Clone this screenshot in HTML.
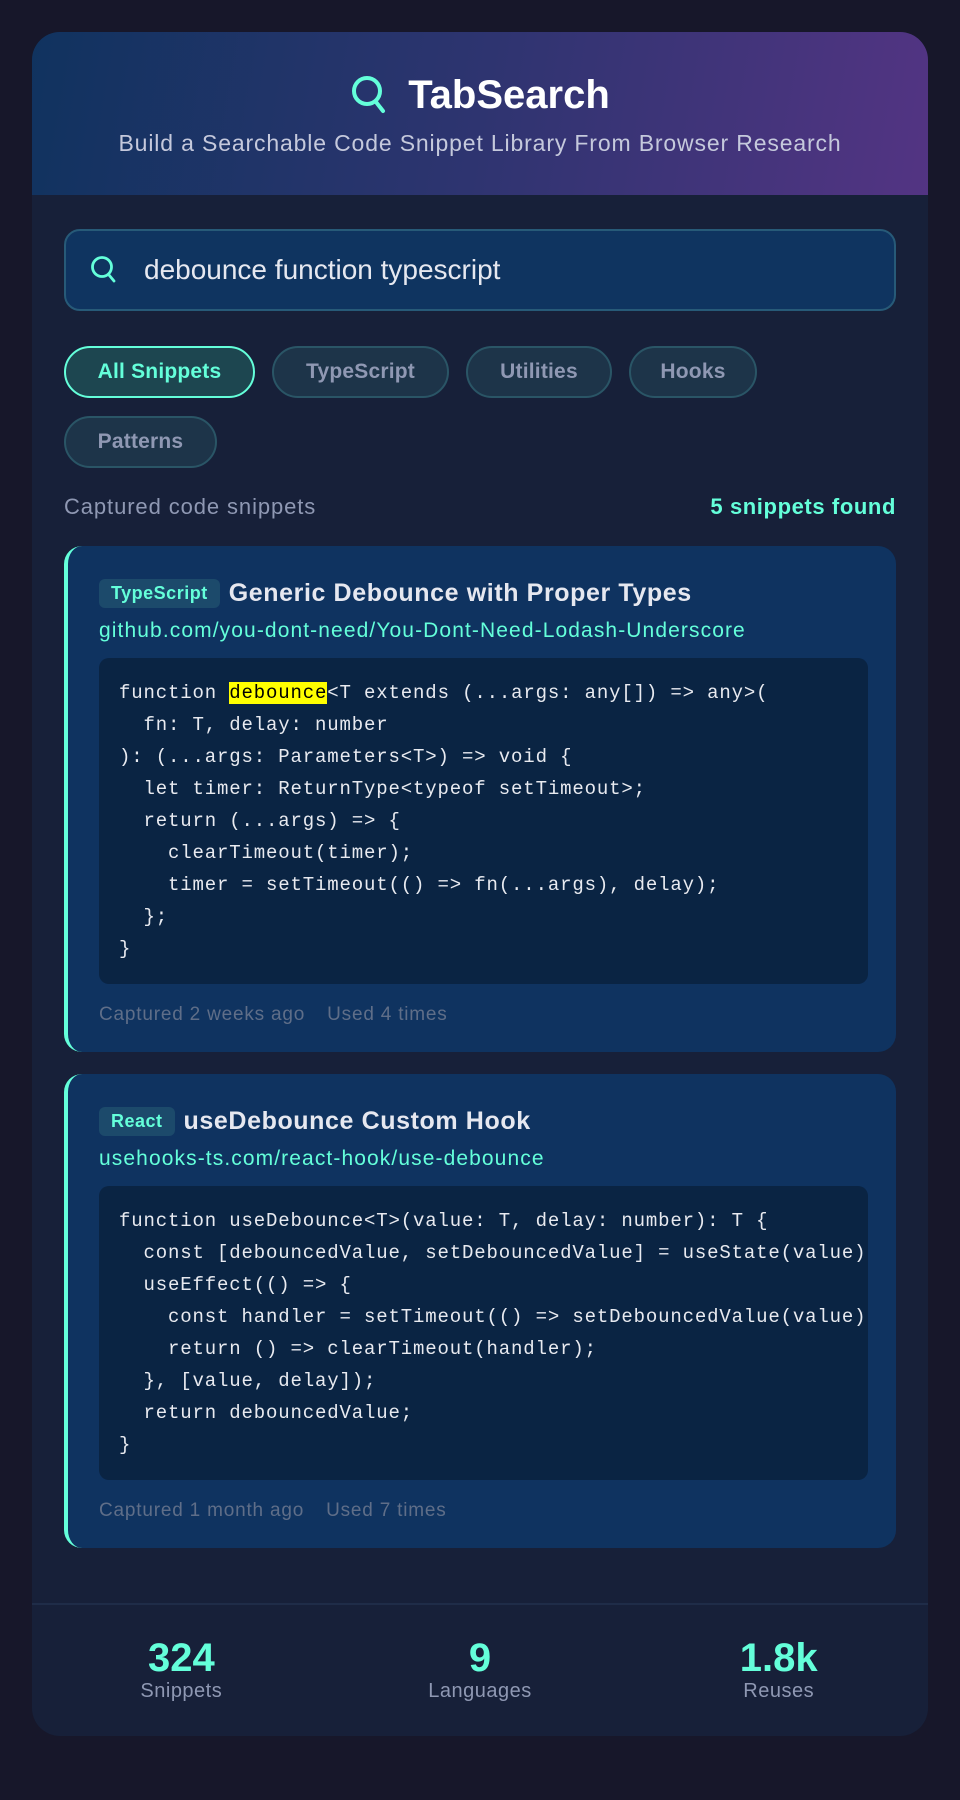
<!DOCTYPE html>
<html><head><meta charset="utf-8"><style>
*{box-sizing:border-box;margin:0;padding:0}
body{width:960px;height:1800px;background:#17172a;font-family:"Liberation Sans",sans-serif;overflow:hidden}
.wrap{position:absolute;left:32px;top:32px;width:896px;height:1704px;background:#172039;border-radius:28px;overflow:hidden}
.hdr{height:163px;background:linear-gradient(100deg,#10335f 0%,#2e3470 50%,#533483 100%);text-align:center;padding-top:41px}
.ttl{display:flex;justify-content:center;align-items:center;gap:18px;color:#fff;font-weight:bold;font-size:40px;height:44px}
.sub{color:#c5c9dc;font-size:23px;letter-spacing:.85px;margin-top:13px}
.main{padding:34px 32px 0 32px}
.search{height:82px;border:2px solid #275a78;border-radius:16px;background:#0f3460;display:flex;align-items:center;padding-left:24px;color:#e6e8f0;font-size:28px}
.search svg{margin-right:26px}
.chips{margin-top:35px;display:flex;flex-wrap:wrap;gap:18px 17px;width:720px}
.chip{height:52px;border-radius:26px;border:2px solid #2a5566;background:#1d3449;color:#8f98b3;font-weight:bold;font-size:21px;letter-spacing:.2px;display:flex;align-items:center;justify-content:center}
.chip.on{border-color:#64ffda;background:#1d4650;color:#64ffda}
.lbl{margin-top:26px;display:flex;justify-content:space-between;font-size:22px;letter-spacing:.9px;color:#8f98b3;height:26px;line-height:26px}
.lbl b{color:#64ffda;font-size:22px;letter-spacing:.6px}
.card{background:#0f3360;border-left:4px solid #64ffda;border-radius:18px;padding:32px 28px 0 31px;margin-top:22px}
.c1{margin-top:26px;height:506px}
.c2{height:474px}
.row{display:flex;align-items:center;height:30px}
.badge{background:#1c4a6b;color:#64ffda;font-weight:bold;font-size:18px;letter-spacing:.5px;border-radius:6px;padding:0 12px;height:29px;line-height:29px;margin-right:9px}
.tt{color:#e6e8f0;font-weight:bold;font-size:25px;letter-spacing:.6px}
.url{color:#64ffda;font-size:21px;letter-spacing:1.1px;margin-top:10px;height:26px;line-height:26px}
pre{margin-top:14px;background:#0a2443;border-radius:10px;padding:19px 0 19px 20px;font-family:"Liberation Mono",monospace;font-size:19px;letter-spacing:.85px;line-height:32px;color:#e8eaf0;overflow:hidden;white-space:pre}
mark{background:#ffff00;color:#000}
.meta{color:#5f6e88;font-size:19px;letter-spacing:.8px;margin-top:20px}
.meta span{margin-right:22px}
.stats{position:absolute;left:0;top:1571px;width:896px;height:133px;border-top:2px solid #1f2c48;display:flex}
.st{flex:1;text-align:center;padding-top:31px}
.st b{display:block;color:#64ffda;font-size:40px;height:44px}
.st span{color:#8f98b3;font-size:20px;letter-spacing:.5px}
</style></head><body>
<div class="wrap">
<div class="hdr">
<div class="ttl"><svg width="40" height="42" viewBox="0 0 40 42"><circle cx="17" cy="17" r="13" fill="none" stroke="#64ffda" stroke-width="4"/><path d="M26 28l7 9" stroke="#64ffda" stroke-width="4" stroke-linecap="round"/></svg>TabSearch</div>
<div class="sub">Build a Searchable Code Snippet Library From Browser Research</div>
</div>
<div class="main">
<div class="search"><svg width="28" height="30" viewBox="0 0 28 30"><circle cx="12" cy="12" r="9.5" fill="none" stroke="#64ffda" stroke-width="2.8"/><path d="M19 20l5 6" stroke="#64ffda" stroke-width="2.8" stroke-linecap="round"/></svg>debounce function typescript</div>
<div class="chips">
<div class="chip on" style="width:191px">All Snippets</div>
<div class="chip" style="width:177px">TypeScript</div>
<div class="chip" style="width:146px">Utilities</div>
<div class="chip" style="width:128px">Hooks</div>
<div class="chip" style="width:153px">Patterns</div>
</div>
<div class="lbl"><span>Captured code snippets</span><b>5 snippets found</b></div>
<div class="card c1">
<div class="row"><span class="badge">TypeScript</span><span class="tt">Generic Debounce with Proper Types</span></div>
<div class="url">github.com/you-dont-need/You-Dont-Need-Lodash-Underscore</div>
<pre>function <mark>debounce</mark>&lt;T extends (...args: any[]) =&gt; any&gt;(
  fn: T, delay: number
): (...args: Parameters&lt;T&gt;) =&gt; void {
  let timer: ReturnType&lt;typeof setTimeout&gt;;
  return (...args) =&gt; {
    clearTimeout(timer);
    timer = setTimeout(() =&gt; fn(...args), delay);
  };
}</pre>
<div class="meta"><span>Captured 2 weeks ago</span><span>Used 4 times</span></div>
</div>
<div class="card c2">
<div class="row"><span class="badge">React</span><span class="tt">useDebounce Custom Hook</span></div>
<div class="url">usehooks-ts.com/react-hook/use-debounce</div>
<pre>function useDebounce&lt;T&gt;(value: T, delay: number): T {
  const [debouncedValue, setDebouncedValue] = useState(value);
  useEffect(() =&gt; {
    const handler = setTimeout(() =&gt; setDebouncedValue(value), delay);
    return () =&gt; clearTimeout(handler);
  }, [value, delay]);
  return debouncedValue;
}</pre>
<div class="meta"><span>Captured 1 month ago</span><span>Used 7 times</span></div>
</div>
</div>
<div class="stats">
<div class="st"><b>324</b><span>Snippets</span></div>
<div class="st"><b>9</b><span>Languages</span></div>
<div class="st"><b>1.8k</b><span>Reuses</span></div>
</div>
</div>
</body></html>
